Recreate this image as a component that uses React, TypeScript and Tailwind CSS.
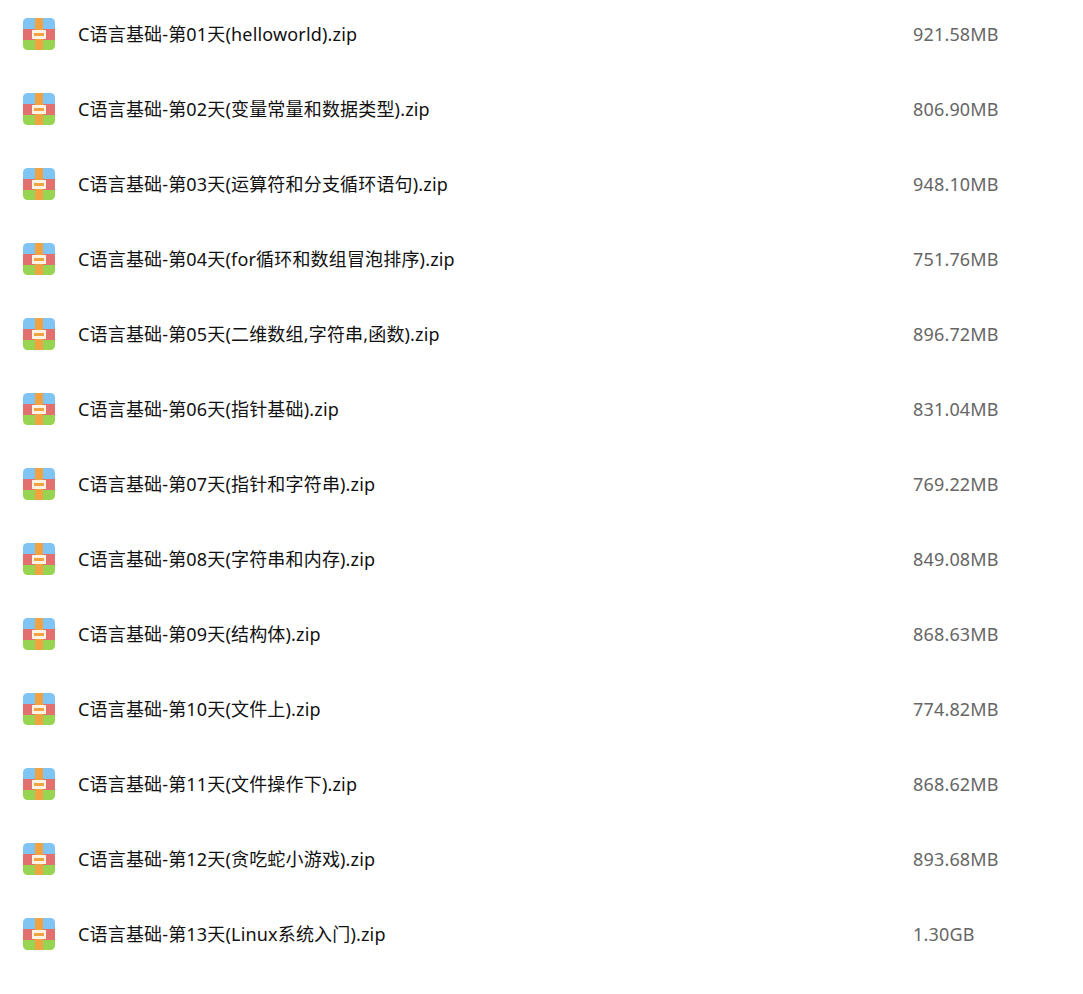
const files = [
  { name: 'C语言基础-第01天(helloworld).zip', size: '921.58MB' },
  { name: 'C语言基础-第02天(变量常量和数据类型).zip', size: '806.90MB' },
  { name: 'C语言基础-第03天(运算符和分支循环语句).zip', size: '948.10MB' },
  { name: 'C语言基础-第04天(for循环和数组冒泡排序).zip', size: '751.76MB' },
  { name: 'C语言基础-第05天(二维数组,字符串,函数).zip', size: '896.72MB' },
  { name: 'C语言基础-第06天(指针基础).zip', size: '831.04MB' },
  { name: 'C语言基础-第07天(指针和字符串).zip', size: '769.22MB' },
  { name: 'C语言基础-第08天(字符串和内存).zip', size: '849.08MB' },
  { name: 'C语言基础-第09天(结构体).zip', size: '868.63MB' },
  { name: 'C语言基础-第10天(文件上).zip', size: '774.82MB' },
  { name: 'C语言基础-第11天(文件操作下).zip', size: '868.62MB' },
  { name: 'C语言基础-第12天(贪吃蛇小游戏).zip', size: '893.68MB' },
  { name: 'C语言基础-第13天(Linux系统入门).zip', size: '1.30GB' },
]

function ZipIcon() {
  return (
    <svg width="32" height="32" viewBox="0 0 32 32" className="shrink-0">
      <defs>
        <clipPath id="zip-clip">
          <rect x="0" y="0" width="32" height="32" rx="4.5" />
        </clipPath>
      </defs>
      <g clipPath="url(#zip-clip)">
        <rect x="0" y="0" width="32" height="11" fill="#80c4f4" />
        <rect x="0" y="11" width="32" height="11" fill="#e2706f" />
        <rect x="0" y="22" width="32" height="10" fill="#96d452" />
        <rect x="12" y="0" width="8" height="32" fill="#f0a340" />
        <rect x="9" y="12" width="14" height="9" rx="0.5" fill="#fdf3e3" />
        <rect x="11" y="15" width="10" height="3" fill="#f0a340" />
      </g>
    </svg>
  )
}

export default function App() {
  return (
    <div className="flex min-h-[994px] flex-col gap-[35px] bg-white pt-[14px] font-['Noto_Sans','Noto_Sans_CJK_SC',sans-serif] text-[18px] tracking-[0.17px]">
      {files.map(file => (
        <div key={file.name} className="flex h-[40px] items-center pl-[23px]">
          <ZipIcon />
          <span className="ml-[23px] w-[835px] whitespace-nowrap text-[#111111]">{file.name}</span>
          <span className="text-[#666666]">{file.size}</span>
        </div>
      ))}
    </div>
  )
}
